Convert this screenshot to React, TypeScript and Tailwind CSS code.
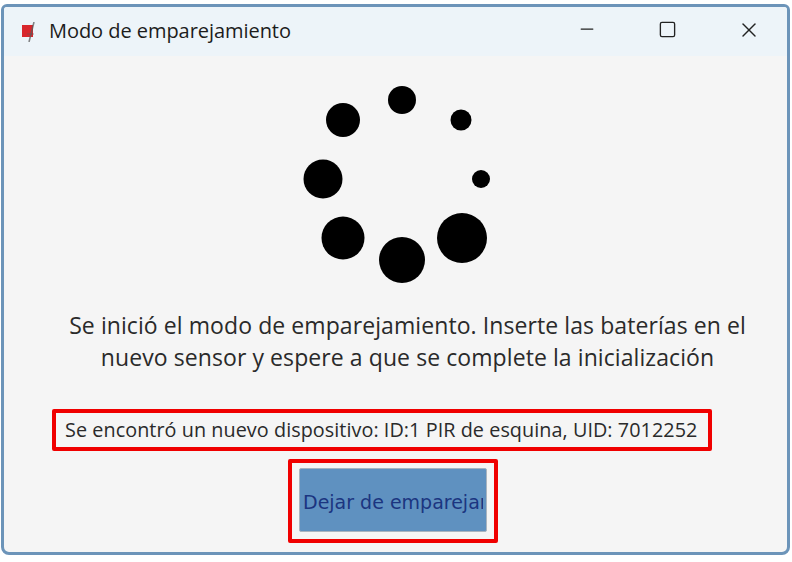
import React from 'react';
import { Minus, Square, X } from 'lucide-react';

const dots = [
  { cx: 112, cy: 25, r: 14 },
  { cx: 171, cy: 45, r: 10.5 },
  { cx: 191, cy: 104, r: 9 },
  { cx: 172, cy: 163, r: 25 },
  { cx: 112, cy: 185, r: 23 },
  { cx: 53, cy: 163, r: 21.5 },
  { cx: 33, cy: 104, r: 19.5 },
  { cx: 53, cy: 45, r: 17 },
];

function AppIcon() {
  return (
    <svg width="16" height="20" viewBox="0 0 16 20" className="shrink-0">
      <rect x="1" y="3" width="11" height="12" fill="#d8262c" />
      <path d="M13 0 L8 20" stroke="#5b5b5b" strokeWidth="1.6" fill="none" opacity="0.75" />
      <path d="M6 12 L13 12" stroke="#5b5b5b" strokeWidth="1.2" fill="none" opacity="0.6" />
    </svg>
  );
}

function Spinner() {
  return (
    <svg width="224" height="210" viewBox="0 0 224 210" className="block">
      {dots.map((d, i) => (
        <circle key={i} cx={d.cx} cy={d.cy} r={d.r} fill="#000" />
      ))}
    </svg>
  );
}

export default function App() {
  return (
    <div className="w-[792px] h-[562px] bg-white pt-[4px] pl-[1px] font-['Open_Sans',sans-serif]">
      <div className="w-[789px] h-[551px] flex flex-col border-[3px] border-[#6c94b9] rounded-t-[6px] rounded-b-[8px] bg-[#f5f5f5] overflow-hidden">
        {/* Title bar */}
        <div className="h-[49px] shrink-0 bg-[#edf4f9] flex items-center pl-[17px]">
          <AppIcon />
          <span className="ml-[12px] mb-[2px] text-[20px] leading-none text-[#1c1c1c] tracking-[-0.05px]">Modo de emparejamiento</span>
          <div className="ml-auto mb-[4px] flex items-center text-[#222]">
            <Minus className="w-[20px] h-[20px] mr-[61px] mb-[2px]" strokeWidth={1.5} />
            <Square className="w-[19px] h-[19px] mr-[60px]" strokeWidth={1.7} />
            <X className="w-[24px] h-[24px] mr-[26px]" strokeWidth={1.4} />
          </div>
        </div>

        {/* Body */}
        <div className="flex-1 flex flex-col items-center">
          <div className="mt-[19px] ml-[13px]">
            <Spinner />
          </div>
          <p className="mt-[24px] w-[720px] text-center text-[23px] leading-[32px] tracking-[0.08px] text-[#2a2a2a] ml-[24px] whitespace-nowrap">
            Se inició el modo de emparejamiento. Inserte las baterías en el
            <br />
            nuevo sensor y espere a que se complete la inicialización
          </p>
          <div className="mt-[36px] self-start ml-[48px] w-[660px] h-[42px] border-[4px] border-[#f00000] rounded-[2px] flex items-center pl-[9px] text-[19.8px] tracking-[0.06px] text-[#2a2a2a] whitespace-nowrap">
            Se encontró un nuevo dispositivo: ID:1 PIR de esquina, UID: 7012252
          </div>
          <div className="mt-[8px] ml-[-5px] w-[210px] h-[84px] border-[4px] border-[#f00000] rounded-[2px] flex items-center justify-center">
            <div className="w-[188px] h-[64px] mt-[-2px] bg-[#5f91c0] border border-[#a9b4bf] rounded-[2px] overflow-hidden flex items-center pl-[3px] pr-[3px] pt-[4px]">
              <span className="block overflow-hidden whitespace-nowrap font-['DejaVu_Sans',sans-serif] text-[19px] text-[#1b3580]">
                Dejar de emparejar
              </span>
            </div>
          </div>
        </div>
      </div>
    </div>
  );
}
